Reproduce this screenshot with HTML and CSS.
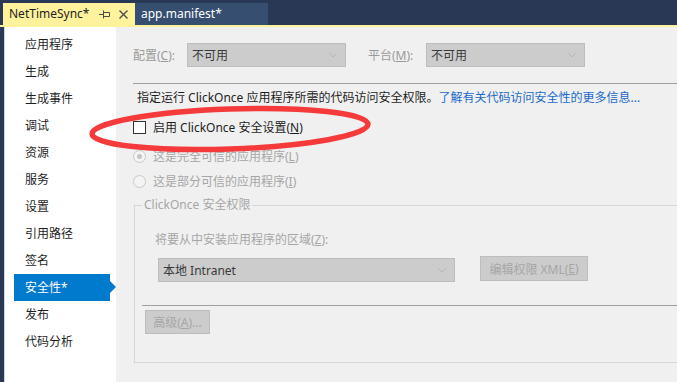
FILE: index.html
```html
<!DOCTYPE html>
<html lang="zh-CN">
<head>
<meta charset="utf-8">
<title>NetTimeSync - 安全性</title>
<link rel="stylesheet" href="styles.css">
</head>
<body>
<div class="tabs">
  <div class="tab active">
    <span class="tab-title">NetTimeSync*</span>
    <svg class="pin" width="12" height="9" viewBox="0 0 12 9"><path d="M0 4.5H4M4.5 0.5V8.5M4.5 2.5H10.5V6.5H4.5" fill="none" stroke="#4d4d4d" stroke-width="1"/></svg>
    <svg class="close" width="9" height="9" viewBox="0 0 9 9"><path d="M0.5 0.5L8.5 8.5M8.5 0.5L0.5 8.5" stroke="#4d4d4d" stroke-width="1.4"/></svg>
  </div>
  <div class="tab">
    <span class="tab-title">app.manifest*</span>
  </div>
</div>
<div class="tabline"></div>
<div class="main">
  <nav class="sidebar">
    <div class="nav-item">应用程序</div>
    <div class="nav-item">生成</div>
    <div class="nav-item">生成事件</div>
    <div class="nav-item">调试</div>
    <div class="nav-item">资源</div>
    <div class="nav-item">服务</div>
    <div class="nav-item">设置</div>
    <div class="nav-item">引用路径</div>
    <div class="nav-item">签名</div>
    <div class="nav-item selected">安全性*</div>
    <div class="nav-item">发布</div>
    <div class="nav-item">代码分析</div>
  </nav>
  <section class="content">
    <div class="config-row">
      <span class="lbl lbl-config">配置(<u>C</u>):</span>
      <div class="select sel-small"><span>不可用</span><svg class="chev" width="8" height="5" viewBox="0 0 8 5"><path d="M0.5 0.5L4 4L7.5 0.5" fill="none" stroke="#b0b0b0" stroke-width="0.8"/></svg></div>
      <span class="lbl lbl-platform">平台(<u>M</u>):</span>
      <div class="select sel-small"><span>不可用</span><svg class="chev" width="8" height="5" viewBox="0 0 8 5"><path d="M0.5 0.5L4 4L7.5 0.5" fill="none" stroke="#b0b0b0" stroke-width="0.8"/></svg></div>
    </div>
    <div class="rule rule-top"></div>
    <p class="desc">指定运行 ClickOnce 应用程序所需的代码访问安全权限。<a class="link">了解有关代码访问安全性的更多信息...</a></p>
    <div class="check-row">
      <span class="checkbox"></span>
      <span class="check-label">启用 ClickOnce 安全设置(<u>N</u>)</span>
    </div>
    <div class="radio-row r1">
      <span class="radio checked"></span>
      <span class="dis">这是完全可信的应用程序(<u>L</u>)</span>
    </div>
    <div class="radio-row r2">
      <span class="radio"></span>
      <span class="dis">这是部分可信的应用程序(<u>I</u>)</span>
    </div>
    <fieldset class="group">
      <legend class="group-legend">ClickOnce 安全权限</legend>
      <div class="zone-label dis">将要从中安装应用程序的区域(<u>Z</u>):</div>
      <div class="zone-row">
        <div class="select sel-zone"><span>本地 Intranet</span><svg class="chev" width="8" height="5" viewBox="0 0 8 5"><path d="M0.5 0.5L4 4L7.5 0.5" fill="none" stroke="#b0b0b0" stroke-width="0.8"/></svg></div>
        <div class="btn btn-xml">编辑权限 XML(<u>E</u>)</div>
      </div>
      <div class="rule rule-group"></div>
      <div class="btn btn-adv">高级(<u>A</u>)...</div>
    </fieldset>
  </section>
</div>
<svg class="annot" width="677" height="382" viewBox="0 0 677 382">
  <ellipse cx="230" cy="129" rx="138" ry="20" transform="rotate(-2 230 129)" fill="none" stroke="#f43a3a" stroke-width="5.5"/>
</svg>
</body>
</html>
```

FILE: styles.css
```css
* { box-sizing: border-box; }
html, body {
  margin: 0;
  padding: 0;
}
body {
  width: 677px;
  height: 382px;
  overflow: hidden;
  background: #293955;
  font-family: "Noto Sans", "Noto Sans CJK SC", sans-serif;
  font-size: 12px;
  color: #1e1e1e;
  position: relative;
}
u { text-decoration: underline; text-underline-offset: 1px; }

/* tabs */
.tabs {
  height: 25px;
  padding: 3px 0 0 3px;
  display: flex;
}
.tab {
  width: 133px;
  height: 22px;
  background: #364e6f;
  display: flex;
  align-items: center;
  padding-left: 6px;
}
.tab.active {
  width: 132px;
  background: #fff29d;
}
.tab-title {
  font-family: "Noto Sans", sans-serif;
  font-size: 12px;
  color: #ffffff;
  line-height: 22px;
}
.tab.active .tab-title { color: #1e1e1e; }
.pin { margin-left: 10px; }
.close { margin-left: 8px; }
.tabline {
  height: 2px;
  background: #fff29d;
}

/* main */
.main {
  display: flex;
  height: 355px;
  padding-left: 4px;
}
.sidebar {
  width: 112px;
  background: #ffffff;
  border-left: 1px solid #cdd5e6;
  padding-top: 4px;
}
.nav-item {
  height: 27px;
  line-height: 27px;
  margin-left: 9px;
  width: 96px;
  padding-left: 11px;
  position: relative;
}
.nav-item.selected {
  background: #007acc;
  color: #ffffff;
}
.nav-item.selected::after {
  content: "";
  position: absolute;
  right: -6px;
  top: 7px;
  border-top: 6px solid transparent;
  border-bottom: 6px solid transparent;
  border-left: 6px solid #007acc;
}

.content {
  flex: 1;
  background: #f0f0f0;
  padding-left: 17px;
  overflow: hidden;
  display: flex;
  flex-direction: column;
}
.config-row {
  margin-top: 16px;
  height: 24px;
  display: flex;
  align-items: center;
}
.lbl { color: #9a9a9a; }
.lbl-config { width: 54px; }
.lbl-platform { width: 58px; margin-left: 22px; }
.select {
  height: 24px;
  background: #cccccc;
  border: 1px solid #bdbdbd;
  display: flex;
  align-items: center;
  justify-content: space-between;
  padding: 0 8px 0 4px;
  color: #3a3a3a;
}
.sel-small { width: 159px; }
.sel-zone { width: 297px; }
.chev { flex: none; }

.rule {
  height: 1px;
  background: #a0a0a0;
  width: 600px;
}
.rule-top { margin-top: 16px; }
.desc {
  margin: 5px 0 0 4px;
  line-height: 18px;
  white-space: nowrap;
}
.link { color: #1b6ac9; }

.check-row, .radio-row {
  display: flex;
  align-items: center;
  height: 18px;
}
.check-row { margin-top: 11px; }
.r1 { margin-top: 11px; }
.r2 { margin-top: 7px; }
.checkbox {
  width: 13px;
  height: 13px;
  border: 1px solid #333333;
  background: #ffffff;
  margin-right: 7px;
}
.radio {
  width: 13px;
  height: 13px;
  border-radius: 50%;
  border: 1px solid #c9c9c9;
  background: #f4f4f4;
  margin-right: 7px;
  display: flex;
  align-items: center;
  justify-content: center;
}
.radio.checked::before {
  content: "";
  width: 5px;
  height: 5px;
  border-radius: 50%;
  background: #c4c4c4;
}
.dis { color: #a6a6a6; }

.group {
  margin: 6px 0 0 1px;
  padding: 0 0 28px 0;
  width: 600px;
  border: 1px solid #d6d6d6;
  min-width: 0;
}
.group-legend {
  margin-left: 7px;
  padding: 0 2px;
  line-height: 18px;
  color: #a6a6a6;
}
.zone-label {
  margin: 17px 0 0 20px;
  line-height: 18px;
}
.zone-row {
  display: flex;
  align-items: flex-start;
  margin: 9px 0 0 23px;
}
.btn {
  background: #cccccc;
  border: 1px solid #bdbdbd;
  color: #a6a6a6;
  display: flex;
  align-items: center;
  justify-content: center;
}
.btn-xml {
  width: 108px;
  height: 25px;
  margin: -2px 0 0 25px;
}
.rule-group {
  margin: 23px 0 0 7px;
}
.btn-adv {
  width: 65px;
  height: 24px;
  margin: 4px 0 0 10px;
}

.annot {
  position: absolute;
  left: 0;
  top: 0;
  pointer-events: none;
}
```
